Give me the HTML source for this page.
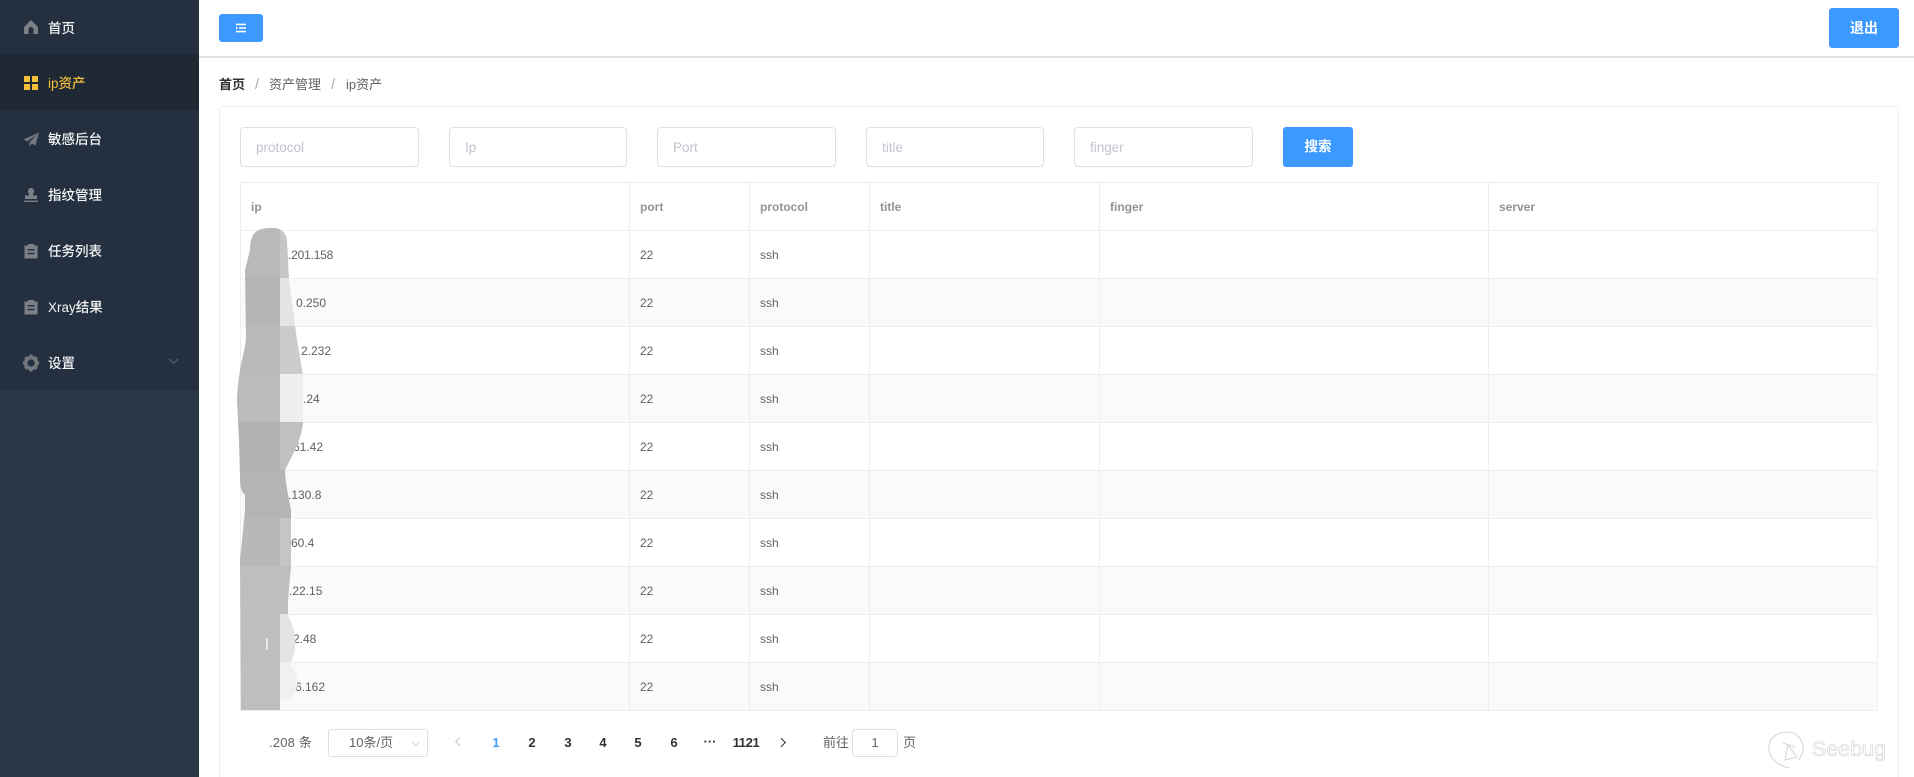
<!DOCTYPE html>
<html lang="zh">
<head>
<meta charset="utf-8">
<title>ip资产</title>
<style>
*{box-sizing:border-box}
html,body{margin:0;padding:0;width:1914px;height:777px;overflow:hidden;background:#fff;font-family:"Liberation Sans","Noto Sans CJK SC",sans-serif;color:#606266}
#root{position:relative;width:1914px;height:777px;overflow:hidden;background:#fff}
#side{position:absolute;left:0;top:0;width:199px;height:777px;background:#293747}
#menu{position:absolute;left:0;top:0;width:199px;height:390px;background:#243040}
.mi{position:absolute;left:0;width:199px;height:56px;line-height:59px;padding-left:48px;font-size:13.5px;color:#f2f3f4;font-weight:500}
.mi svg{position:absolute;left:22px;top:20px;width:18px;height:18px}
.active{background:#1f2933;color:#f7bf3c}
#hdr{position:absolute;left:199px;top:0;width:1715px;height:58px;background:#fff;border-bottom:2px solid #dedfe2}
.btn{position:absolute;background:#3b99ff;border-radius:3px;color:#fff;text-align:center;font-weight:700}
.bc{position:absolute;top:76px;font-size:13px;line-height:18px;white-space:nowrap;color:#606266}
#card{position:absolute;left:219px;top:106px;width:1680px;height:671px;border:1px solid #ebeef5;border-bottom:0;border-radius:4px 4px 0 0;background:#fff}
.ipt{position:absolute;top:127px;height:40px;width:178px;border:1px solid #dcdfe6;border-radius:4px;padding-left:15px;font-size:13.5px;line-height:40px;color:#c0c4cc;background:#fff}
table{position:absolute;left:240px;top:182px;width:1637px;border-collapse:collapse;table-layout:fixed;font-size:12px;border:1px solid #ebeef5}
td,th{border:1px solid #ebeef5;height:48px;padding:0 0 0 10px;text-align:left;font-weight:400;color:#606266}
th{font-weight:700;color:#909399;font-size:12px}
tr.odd td{background:#fafafa}
.sfx{position:absolute;font-size:12px;color:#606266;line-height:16px;white-space:nowrap}
.pg{position:absolute;top:734px;font-size:13px;line-height:18px;color:#303133;font-weight:700;text-align:center}
.pt{position:absolute;top:734px;font-size:13px;line-height:18px;color:#606266;white-space:nowrap}
</style>
</head>
<body>
<div id="root">
<div id="side">
 <div id="menu">
  <div class="mi" style="top:0;height:54px;line-height:57px">
   <svg viewBox="0 0 18 18" style="top:18px"><path fill="#7d8087" d="M9 2 L16 9 V16 H11.5 V11.5 A2.5 2.5 0 0 0 6.5 11.5 V16 H2 V9 Z"/></svg>首页</div>
  <div class="mi active" style="top:54px">
   <svg viewBox="0 0 18 18"><path fill="#f7bf3c" d="M2 2H8V8H2ZM10 2H16V8H10ZM2 10H8V16H2ZM10 10H16V16H10Z"/></svg>ip资产</div>
  <div class="mi" style="top:110px">
   <svg viewBox="0 0 18 18"><path fill="#73767d" d="M17 2.5 L1.5 9.5 L5.5 11.5 L14 5 L7.5 12.5 L7.5 16.5 L10 13.8 L13.5 15.5 Z"/></svg>敏感后台</div>
  <div class="mi" style="top:166px">
   <svg viewBox="0 0 18 18"><path fill="#7d8087" d="M9 2 A3.2 3.2 0 0 1 11 7.6 V9.5 H15 V13 H3 V9.5 H7 V7.6 A3.2 3.2 0 0 1 9 2 Z M2 14.6 H16 V16 H2 Z"/></svg>指纹管理</div>
  <div class="mi" style="top:222px">
   <svg viewBox="0 0 18 18"><path fill="#7d8087" fill-rule="evenodd" d="M6 2H12V3.5H15.5V16.5H2.5V3.5H6Z M5.5 7V8.4H12.5V7Z M5.5 10.8V12.2H12.5V10.8Z"/></svg>任务列表</div>
  <div class="mi" style="top:278px">
   <svg viewBox="0 0 18 18"><path fill="#7d8087" fill-rule="evenodd" d="M6 2H12V3.5H15.5V16.5H2.5V3.5H6Z M5.5 7V8.4H12.5V7Z M5.5 10.8V12.2H12.5V10.8Z"/></svg>Xray结果</div>
  <div class="mi" style="top:334px">
   <svg viewBox="0 0 18 18" style="left:22px;width:18px"><circle cx="9" cy="9" r="5.4" fill="none" stroke="#73767d" stroke-width="3.6"/><path stroke="#73767d" stroke-width="3.2" d="M9 .5V4M9 14V17.5M.8 9H4M14 9H17.2M3.2 3.2L5.5 5.5M12.5 12.5L14.8 14.8M14.8 3.2L12.5 5.5M5.5 12.5L3.2 14.8"/></svg>设置
   <svg viewBox="0 0 12 8" style="left:168px;top:24px;width:11px;height:7px"><path d="M1 1L6 6L11 1" fill="none" stroke="#6b7480" stroke-width="1"/></svg></div>
 </div>
</div>

<div id="hdr"></div>
<div class="btn" style="left:219px;top:14px;width:44px;height:28px">
 <svg viewBox="0 0 10 10" style="position:absolute;left:17px;top:9px;width:10px;height:10px"><path fill="#fff" d="M0 .6H10V2.2H0ZM3 4.2H10V5.8H3ZM0 7.8H10V9.4H0ZM0 3.4L2 5L0 6.6Z"/></svg>
</div>
<div class="btn" style="left:1829px;top:8px;width:70px;height:40px;line-height:40px;font-size:14px">退出</div>

<div class="bc" style="left:219px;font-weight:700;color:#303133">首页</div>
<div class="bc" style="left:255px;color:#a8abb2;font-size:15px">/</div>
<div class="bc" style="left:269px">资产管理</div>
<div class="bc" style="left:331px;color:#a8abb2;font-size:15px">/</div>
<div class="bc" style="left:346px">ip资产</div>

<div id="card"></div>
<div class="ipt" style="left:240px;width:179px">protocol</div>
<div class="ipt" style="left:449px">Ip</div>
<div class="ipt" style="left:657px;width:179px">Port</div>
<div class="ipt" style="left:866px">title</div>
<div class="ipt" style="left:1074px;width:179px">finger</div>
<div class="btn" style="left:1283px;top:127px;width:70px;height:40px;line-height:40px;font-size:13.5px">搜索</div>

<table>
<colgroup><col style="width:389px"><col style="width:120px"><col style="width:120px"><col style="width:230px"><col style="width:389px"><col style="width:389px"></colgroup>
<tr><th>ip</th><th>port</th><th>protocol</th><th>title</th><th>finger</th><th>server</th></tr>
<tr><td></td><td>22</td><td>ssh</td><td></td><td></td><td></td></tr>
<tr class="odd"><td></td><td>22</td><td>ssh</td><td></td><td></td><td></td></tr>
<tr><td></td><td>22</td><td>ssh</td><td></td><td></td><td></td></tr>
<tr class="odd"><td></td><td>22</td><td>ssh</td><td></td><td></td><td></td></tr>
<tr><td></td><td>22</td><td>ssh</td><td></td><td></td><td></td></tr>
<tr class="odd"><td></td><td>22</td><td>ssh</td><td></td><td></td><td></td></tr>
<tr><td></td><td>22</td><td>ssh</td><td></td><td></td><td></td></tr>
<tr class="odd"><td></td><td>22</td><td>ssh</td><td></td><td></td><td></td></tr>
<tr><td></td><td>22</td><td>ssh</td><td></td><td></td><td></td></tr>
<tr class="odd"><td></td><td>22</td><td>ssh</td><td></td><td></td><td></td></tr>
</table>

<span class="sfx" style="left:288px;top:247px;letter-spacing:-.2px">.201.158</span>
<span class="sfx" style="left:296px;top:295px">0.250</span>
<span class="sfx" style="left:301px;top:343px">2.232</span>
<span class="sfx" style="left:303px;top:391px">.24</span>
<span class="sfx" style="left:293px;top:439px">61.42</span>
<span class="sfx" style="left:288px;top:487px">.130.8</span>
<span class="sfx" style="left:291px;top:535px">60.4</span>
<span class="sfx" style="left:289px;top:583px">.22.15</span>
<span class="sfx" style="left:293px;top:631px">2.48</span>
<span class="sfx" style="left:295px;top:679px">6.162</span>

<svg width="1914" height="777" style="position:absolute;left:0;top:0;pointer-events:none">
 <defs>
  <clipPath id="b"><path d="M270 228 C280 227 286 232 287 240 L289 280 L297 340 L303 375 L303 422 C302 435 298 445 285 470 C285 480 288 495 291 510 L291 566 L288 600 L288 615 C293 625 296 635 295 645 C295 655 292 660 290 664 C296 670 298 678 297 686 C295 700 285 700 280 701 L280 710 L241 710 L240 560 L245 510 L245 495 C240 490 240 485 240 475 L239 440 L237 400 C238 370 245 350 246 340 L245 270 L250 250 C250 235 255 228 270 228 Z"/></clipPath>
 </defs>
 <g clip-path="url(#b)">
  <rect x="230" y="225" width="50" height="53" fill="#b9b9ba"/><rect x="280" y="225" width="30" height="53" fill="#c6c6c7"/>
  <rect x="230" y="278" width="50" height="48" fill="#b5b5b6"/><rect x="280" y="278" width="30" height="48" fill="#e4e4e5"/>
  <rect x="230" y="326" width="50" height="48" fill="#b9b9ba"/><rect x="280" y="326" width="30" height="48" fill="#cbcbcc"/>
  <rect x="230" y="374" width="50" height="48" fill="#bbbbbc"/><rect x="280" y="374" width="30" height="48" fill="#eeeeef"/>
  <rect x="230" y="422" width="50" height="48" fill="#b2b2b3"/><rect x="280" y="422" width="30" height="48" fill="#c0c0c0"/>
  <rect x="230" y="470" width="70" height="48" fill="#b4b4b5"/>
  <rect x="230" y="518" width="50" height="48" fill="#b8b8b9"/><rect x="280" y="518" width="30" height="48" fill="#c5c5c7"/>
  <rect x="230" y="566" width="70" height="48" fill="#bebebf"/>
  <rect x="230" y="614" width="50" height="48" fill="#bebebf"/><rect x="280" y="614" width="30" height="48" fill="#e4e4e6"/>
  <rect x="230" y="662" width="50" height="49" fill="#bebebf"/><rect x="280" y="662" width="30" height="49" fill="#f0f0f3"/>
 </g>
 <rect x="266" y="638" width="2" height="12" fill="#e8e8e8"/>
 <!-- watermark -->
 <g fill="none" stroke="#d6d6d6" stroke-width="1.1">
  <path d="M1790 768 C1776 766 1768 756 1769 746 C1770 737 1779 732 1787 732 C1798 732 1804 741 1803 751 C1802 755 1801 757 1799 760"/>
  <path d="M1783 743 L1795 747 M1788 745 L1785 760 L1797 757 Z"/>
 </g>
 <text x="1812" y="756" font-family="Liberation Sans, sans-serif" font-size="21.5" fill="#fff" stroke="#cfcfcf" stroke-width="0.6">Seebug</text>
</svg>

<div class="pt" style="left:269px;letter-spacing:.2px">.208 条</div>
<div style="position:absolute;left:328px;top:729px;width:100px;height:28px;border:1px solid #dcdfe6;border-radius:3px;background:#fff"></div>
<div class="pt" style="left:349px">10条/页</div>
<svg viewBox="0 0 12 8" style="position:absolute;left:411px;top:741px;width:9px;height:6px"><path d="M1 1L6 6L11 1" fill="none" stroke="#c0c4cc" stroke-width="1"/></svg>
<svg viewBox="0 0 8 12" style="position:absolute;left:454px;top:736px;width:7px;height:11px"><path d="M7 1L2 6L7 11" fill="none" stroke="#c0c4cc" stroke-width="1.2"/></svg>
<div class="pg" style="left:486px;width:20px;color:#409eff">1</div>
<div class="pg" style="left:522px;width:20px">2</div>
<div class="pg" style="left:558px;width:20px">3</div>
<div class="pg" style="left:593px;width:20px">4</div>
<div class="pg" style="left:628px;width:20px">5</div>
<div class="pg" style="left:664px;width:20px">6</div>
<div class="pg" style="left:700px;width:20px;top:733px">···</div>
<div class="pg" style="left:730px;width:32px;letter-spacing:-.4px">1121</div>
<svg viewBox="0 0 8 12" style="position:absolute;left:780px;top:737px;width:7px;height:11px"><path d="M1 1L6 6L1 11" fill="none" stroke="#303133" stroke-width="1.2"/></svg>
<div class="pt" style="left:823px">前往</div>
<div style="position:absolute;left:852px;top:729px;width:46px;height:28px;border:1px solid #dcdfe6;border-radius:4px;background:#fff;text-align:center;font-size:13px;line-height:26px;color:#606266">1</div>
<div class="pt" style="left:903px">页</div>
</div>
</body>
</html>
